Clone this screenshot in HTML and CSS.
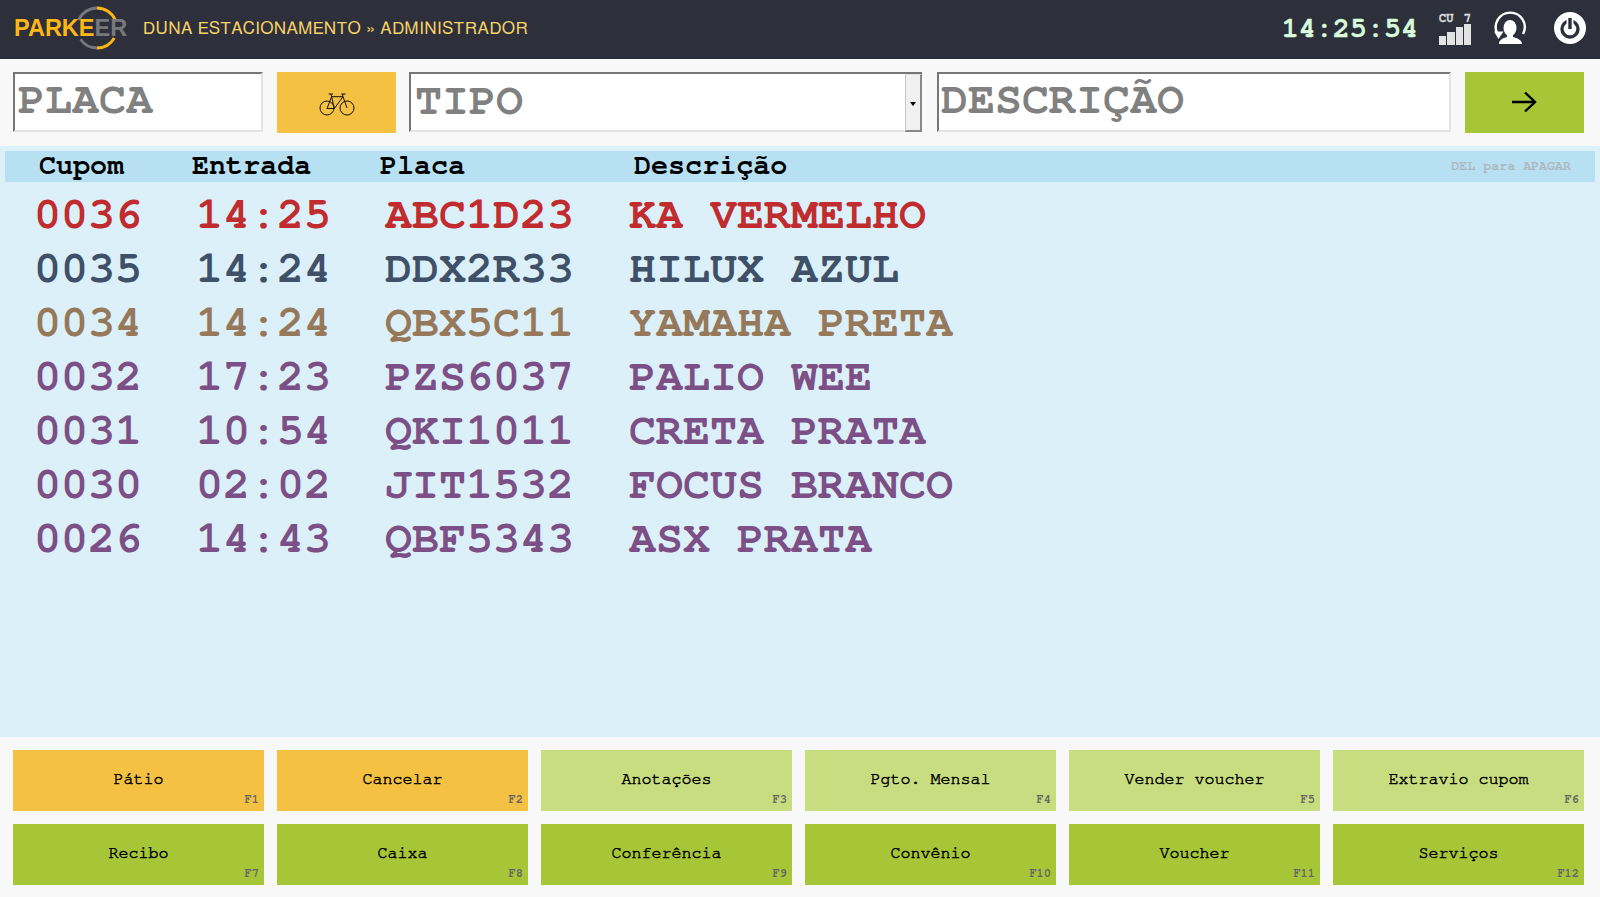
FILE: index.html
```html
<!DOCTYPE html>
<html lang="pt-BR">
<head>
<meta charset="utf-8">
<title>Parkeer</title>
<link rel="stylesheet" href="styles.css">
</head>
<body>
<div class="app">
  <header class="topbar">
    <div class="logo">
      <svg class="logo-ring" viewBox="0 0 48 48" width="48" height="48" fill="none" stroke-width="2.800">
        <path d="M24 4A20 20 0 0 0 5.700 16M7.500 35.300A20 20 0 0 0 24 44" stroke="#77787c"/>
        <path d="M24 4A20 20 0 0 1 42.300 16M41.300 34A20 20 0 0 1 24 44" stroke="#fdb813"/>
      </svg>
      <span class="logo-text"><span class="y">PARKE</span><span class="g">ER</span></span>
    </div>
    <div class="title">DUNA ESTACIONAMENTO » ADMINISTRADOR</div>
    <div class="clock">14:25:54</div>
    <div class="signal">
      <div class="signal-labels"><span>CU</span><span>7</span></div>
      <div class="bars"><i class="b1"></i><i class="b2"></i><i class="b3"></i><i class="b4"></i></div>
    </div>
    <svg class="user-icon" viewBox="0 0 36 36" width="36" height="36">
      <path d="M5.500 24A14.500 14.500 0 1 1 31 24" fill="none" stroke="#fff" stroke-width="2.400"/>
      <path d="M2 21.500h9.500l-5 7.500z" fill="#fff"/>
      <ellipse cx="18" cy="18" rx="6.500" ry="8" fill="#fff"/>
      <path d="M7 34c0-4 4-6 8-7v-3h6v3c4 1 9 3 9 7z" fill="#fff"/>
    </svg>
    <svg class="power-icon" viewBox="0 0 34 34" width="34" height="34">
      <circle cx="17" cy="17" r="16" fill="#fff"/>
      <circle cx="17" cy="18" r="8" fill="none" stroke="#2d303b" stroke-width="3.400"/>
      <path d="M17 5v13" stroke="#fff" stroke-width="7"/>
      <path d="M17 7v11" stroke="#2d303b" stroke-width="3.400"/>
    </svg>
  </header>

  <section class="toolbar">
    <input class="field field-placa" type="text" placeholder="PLACA">
    <button class="tool-btn tool-yellow" type="button" aria-label="Bicicleta">
      <svg class="bike" viewBox="0 0 36 24" width="36" height="24" fill="none" stroke="#111" stroke-width="1">
        <circle cx="8" cy="16" r="7"/>
        <circle cx="28" cy="16" r="7"/>
        <path d="M12.600 4.700H24L15.300 16.500H8L12.600 4.700L15.300 16.500M24 4.700L28 16M23.700 2V4.700M11.800 2L12.600 4.700M9.600 2H14M22.300 2H26.600"/>
      </svg>
    </button>
    <div class="select">
      <span class="select-text">TIPO</span>
      <span class="select-btn"><i class="caret"></i></span>
    </div>
    <input class="field field-desc" type="text" placeholder="DESCRIÇÃO">
    <button class="tool-btn tool-green" type="button" aria-label="Avançar">
      <svg class="arrow" viewBox="0 0 26 22" width="26" height="22" fill="none" stroke="#000" stroke-width="2.400">
        <path d="M1 11H24M14 1.500L24 11L14 20.500"/>
      </svg>
    </button>
  </section>

  <main class="panel">
    <div class="thead">
      <span class="col-cupom">Cupom</span>
      <span class="col-entrada">Entrada</span>
      <span class="col-placa">Placa</span>
      <span class="col-desc">Descrição</span>
      <span class="del-hint">DEL para APAGAR</span>
    </div>
    <div class="rows">
      <div class="row red"><span class="c1">0036</span><span class="c2">14:25</span><span class="c3">ABC1D23</span><span class="c4">KA VERMELHO</span></div>
      <div class="row slate"><span class="c1">0035</span><span class="c2">14:24</span><span class="c3">DDX2R33</span><span class="c4">HILUX AZUL</span></div>
      <div class="row brown"><span class="c1">0034</span><span class="c2">14:24</span><span class="c3">QBX5C11</span><span class="c4">YAMAHA PRETA</span></div>
      <div class="row purple"><span class="c1">0032</span><span class="c2">17:23</span><span class="c3">PZS6037</span><span class="c4">PALIO WEE</span></div>
      <div class="row purple"><span class="c1">0031</span><span class="c2">10:54</span><span class="c3">QKI1011</span><span class="c4">CRETA PRATA</span></div>
      <div class="row purple"><span class="c1">0030</span><span class="c2">02:02</span><span class="c3">JIT1532</span><span class="c4">FOCUS BRANCO</span></div>
      <div class="row purple"><span class="c1">0026</span><span class="c2">14:43</span><span class="c3">QBF5343</span><span class="c4">ASX PRATA</span></div>
    </div>
  </main>

  <footer class="actions">
    <button class="act yellow" type="button">Pátio<small>F1</small></button>
    <button class="act yellow" type="button">Cancelar<small>F2</small></button>
    <button class="act light" type="button">Anotações<small>F3</small></button>
    <button class="act light" type="button">Pgto. Mensal<small>F4</small></button>
    <button class="act light" type="button">Vender voucher<small>F5</small></button>
    <button class="act light" type="button">Extravio cupom<small>F6</small></button>
    <button class="act green" type="button">Recibo<small>F7</small></button>
    <button class="act green" type="button">Caixa<small>F8</small></button>
    <button class="act green" type="button">Conferência<small>F9</small></button>
    <button class="act green" type="button">Convênio<small>F10</small></button>
    <button class="act green" type="button">Voucher<small>F11</small></button>
    <button class="act green" type="button">Serviços<small>F12</small></button>
  </footer>
</div>
</body>
</html>
```

FILE: styles.css
```css
* { box-sizing: border-box; }
html, body { margin: 0; height: 100%; overflow: hidden; }
body { background: #f8f8f8; font-family: FreeMono, "Liberation Mono", monospace; font-weight: bold; }
.app { display: flex; flex-direction: column; height: 897px; }

.topbar { height: 59px; flex: none; background: #2d303b; display: flex; align-items: center; padding: 0 13px 0 14px; }
.logo { position: relative; width: 129px; height: 59px; flex: none; display: flex; align-items: center; }
.logo-ring { position: absolute; left: 58.500px; top: 3.500px; }
.logo-text { position: relative; font: bold 23.500px "Liberation Sans", sans-serif; margin-bottom: 3px; }
.logo-text .y { color: #fdb813; }
.logo-text .g { color: #77787c; }
.title { font: 17px FreeSans, "Liberation Sans", sans-serif; color: #f8d264; letter-spacing: 0.6px; margin-bottom: 2px; }
.clock { margin-left: auto; font-size: 28.400px; color: #d9fbdc; margin-bottom: 2px; -webkit-text-stroke: 0.3px #d9fbdc; }
.signal { width: 32px; margin-left: 21px; display: flex; flex-direction: column; margin-bottom: 2px; }
.signal-labels { display: flex; justify-content: space-between; font-size: 12px; color: #e0e0e0; line-height: 12px; -webkit-text-stroke: 0.3px #e0e0e0; }
.bars { display: flex; align-items: flex-end; gap: 1px; height: 21px; }
.bars i { flex: 1; background: #e3e3e3; display: block; }
.b1 { height: 9px; } .b2 { height: 13px; } .b3 { height: 18px; } .b4 { height: 21px; }
.user-icon { margin-left: 21px; margin-bottom: 3px; }
.power-icon { margin-left: 25px; margin-bottom: 4px; }

.toolbar { height: 87px; flex: none; padding: 13px 13px; display: flex; gap: 14px; align-items: flex-start; }
.field, .select { height: 60px; border: 2px solid; border-color: #767676 #e3e3e3 #e3e3e3 #767676; background: #fff; font-family: FreeMono, "Liberation Mono", monospace; font-size: 45px; font-weight: bold; color: #808080; }
.field { padding: 0 0 5px 3px; outline: none; }
.field::placeholder { color: #808080; opacity: 1; }
.field-placa { width: 250px; }
.field-desc { width: 514px; margin-left: 1px; padding-left: 2px; }
.select { width: 513px; margin-left: -1px; display: flex; justify-content: space-between; border-right: 0; }
.select-text { padding-left: 4px; line-height: 54px; }
.select-btn { width: 17px; margin-bottom: -2px; background: #f0f0f0; border-style: solid; border-width: 1px 2px 2px 1px; border-color: #e3e3e3 #888 #888 #c8c8c8; display: flex; align-items: center; justify-content: center; }
.caret { border: 3.500px solid transparent; border-top: 4px solid #000; border-bottom: 0; margin-top: 2px; }
.tool-btn { height: 61px; width: 119px; border: 0; padding: 0; display: flex; align-items: center; justify-content: center; flex: none; }
.tool-yellow { background: #f4c142; }
.tool-green { background: #a6c638; }
.bike { margin-top: 3px; }
.arrow { margin: 0 2px 2px 0; }

.panel { flex: 1; min-height: 0; background: #dcf0f9; padding: 5px 5px 0; }
.thead { height: 31px; padding-bottom: 2px; background: #b7e0f3; display: flex; align-items: center; font-size: 28.400px; color: #000; }
.col-cupom { margin-left: 34px; width: 153px; }
.col-entrada { width: 188px; }
.col-placa { width: 254px; }
.del-hint { margin-left: auto; margin-right: 24px; font-size: 13.300px; color: #aeb9bf; }
.rows { display: flex; flex-direction: column; padding-top: 5px; }
.row { height: 54px; display: flex; align-items: center; font-size: 45px; }
.c1 { margin-left: 29px; width: 162px; }
.c2 { width: 189px; }
.c3 { width: 244px; }
.red { color: #c12c2f; }
.slate { color: #3e5168; }
.brown { color: #96795a; }
.purple { color: #7c5086; }

.actions { height: 160px; flex: none; padding: 13px 16px 12px 13px; display: grid; grid-template-columns: repeat(6, 1fr); gap: 13px; }
.act { position: relative; border: 0; padding: 0 0 3px; font-family: FreeMono, "Liberation Mono", monospace; font-size: 16.700px; font-weight: normal; -webkit-text-stroke: 0.5px #000; color: #000; }
.act small { position: absolute; right: 5px; bottom: 6px; font-size: 12px; font-weight: bold; -webkit-text-stroke: 0; color: #666; }
.yellow { background: #f4c142; }
.light { background: #c8dd80; }
.green { background: #a6c638; }
```
